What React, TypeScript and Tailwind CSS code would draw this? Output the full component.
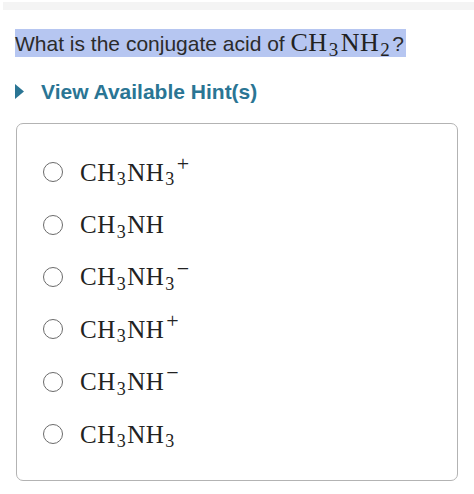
import { useState } from "react";

type Choice = { id: string; tail: string; tailSub?: string; sup?: string };

const choices: Choice[] = [
  { id: "a", tail: "NH", tailSub: "3", sup: "+" },
  { id: "b", tail: "NH" },
  { id: "c", tail: "NH", tailSub: "3", sup: "−" },
  { id: "d", tail: "NH", sup: "+" },
  { id: "e", tail: "NH", sup: "−" },
  { id: "f", tail: "NH", tailSub: "3" },
];

function Formula({ c }: { c: Choice }) {
  return (
    <span className="font-['Liberation_Serif',serif] text-[25px] leading-none text-[#222] tracking-[0.5px]">
      CH<sub className="text-[18px] ml-[1px] mr-[1px]">3</sub>
      {c.tail}
      {c.tailSub && <sub className="text-[18px] ml-[1px]">{c.tailSub}</sub>}
      {c.sup && <sup className="text-[22px] ml-[2px] -top-[0.45em]">{c.sup}</sup>}
    </span>
  );
}

export default function App() {
  const [picked, setPicked] = useState<string | null>(null);

  return (
    <div className="w-[474px] h-[494px] bg-white overflow-hidden font-['Liberation_Sans',Arial,sans-serif]">
      {/* top strip */}
      <div className="mt-[2px] ml-[3px] h-[8px] bg-[#f4f4f4]" />

      {/* Question */}
      <div className="pl-[15px] pt-[19px] h-[56px]">
        <span className="bg-[#b6c6f1] text-[21px] leading-[27px] text-[#2b2b2b] inline-block pr-[2px]">
          What is the conjugate acid of{" "}
          <span className="font-['Liberation_Serif',serif] text-[26px] text-[#222] tracking-[0.5px]">
            CH<sub className="text-[19px] ml-[1px] mr-[2px]">3</sub>NH<sub className="text-[19px] ml-[1px] mr-[2px]">2</sub>
          </span>
          ?
        </span>
      </div>

      {/* Hint toggle */}
      <button className="flex items-center gap-[17px] pl-[15px] mt-[13px] h-[24px] text-[#2a7594]">
        <svg width="9" height="15" viewBox="0 0 9 15" className="shrink-0">
          <path d="M0 0 L9 7.5 L0 15 Z" fill="#2a7594" />
        </svg>
        <span className="font-bold text-[21px] leading-none">View Available Hint(s)</span>
      </button>

      {/* Choices */}
      <div className="ml-[16px] mt-[20px] w-[442px] h-[358px] border-[1.5px] border-[#b3b3b3] rounded-[7px] pt-[22px]">
        {choices.map((c) => (
          <label key={c.id} className="flex items-center h-[52.4px] shrink-0 overflow-visible pl-[26px] gap-[17px] cursor-pointer">
            <input
              type="radio"
              name="ans"
              checked={picked === c.id}
              onChange={() => setPicked(c.id)}
              className="appearance-none w-[20px] h-[20px] rounded-full border-[1.5px] border-[#6b6b6b] bg-white checked:border-[6px] checked:border-[#2a7594]"
            />
            <Formula c={c} />
          </label>
        ))}
      </div>
    </div>
  );
}
